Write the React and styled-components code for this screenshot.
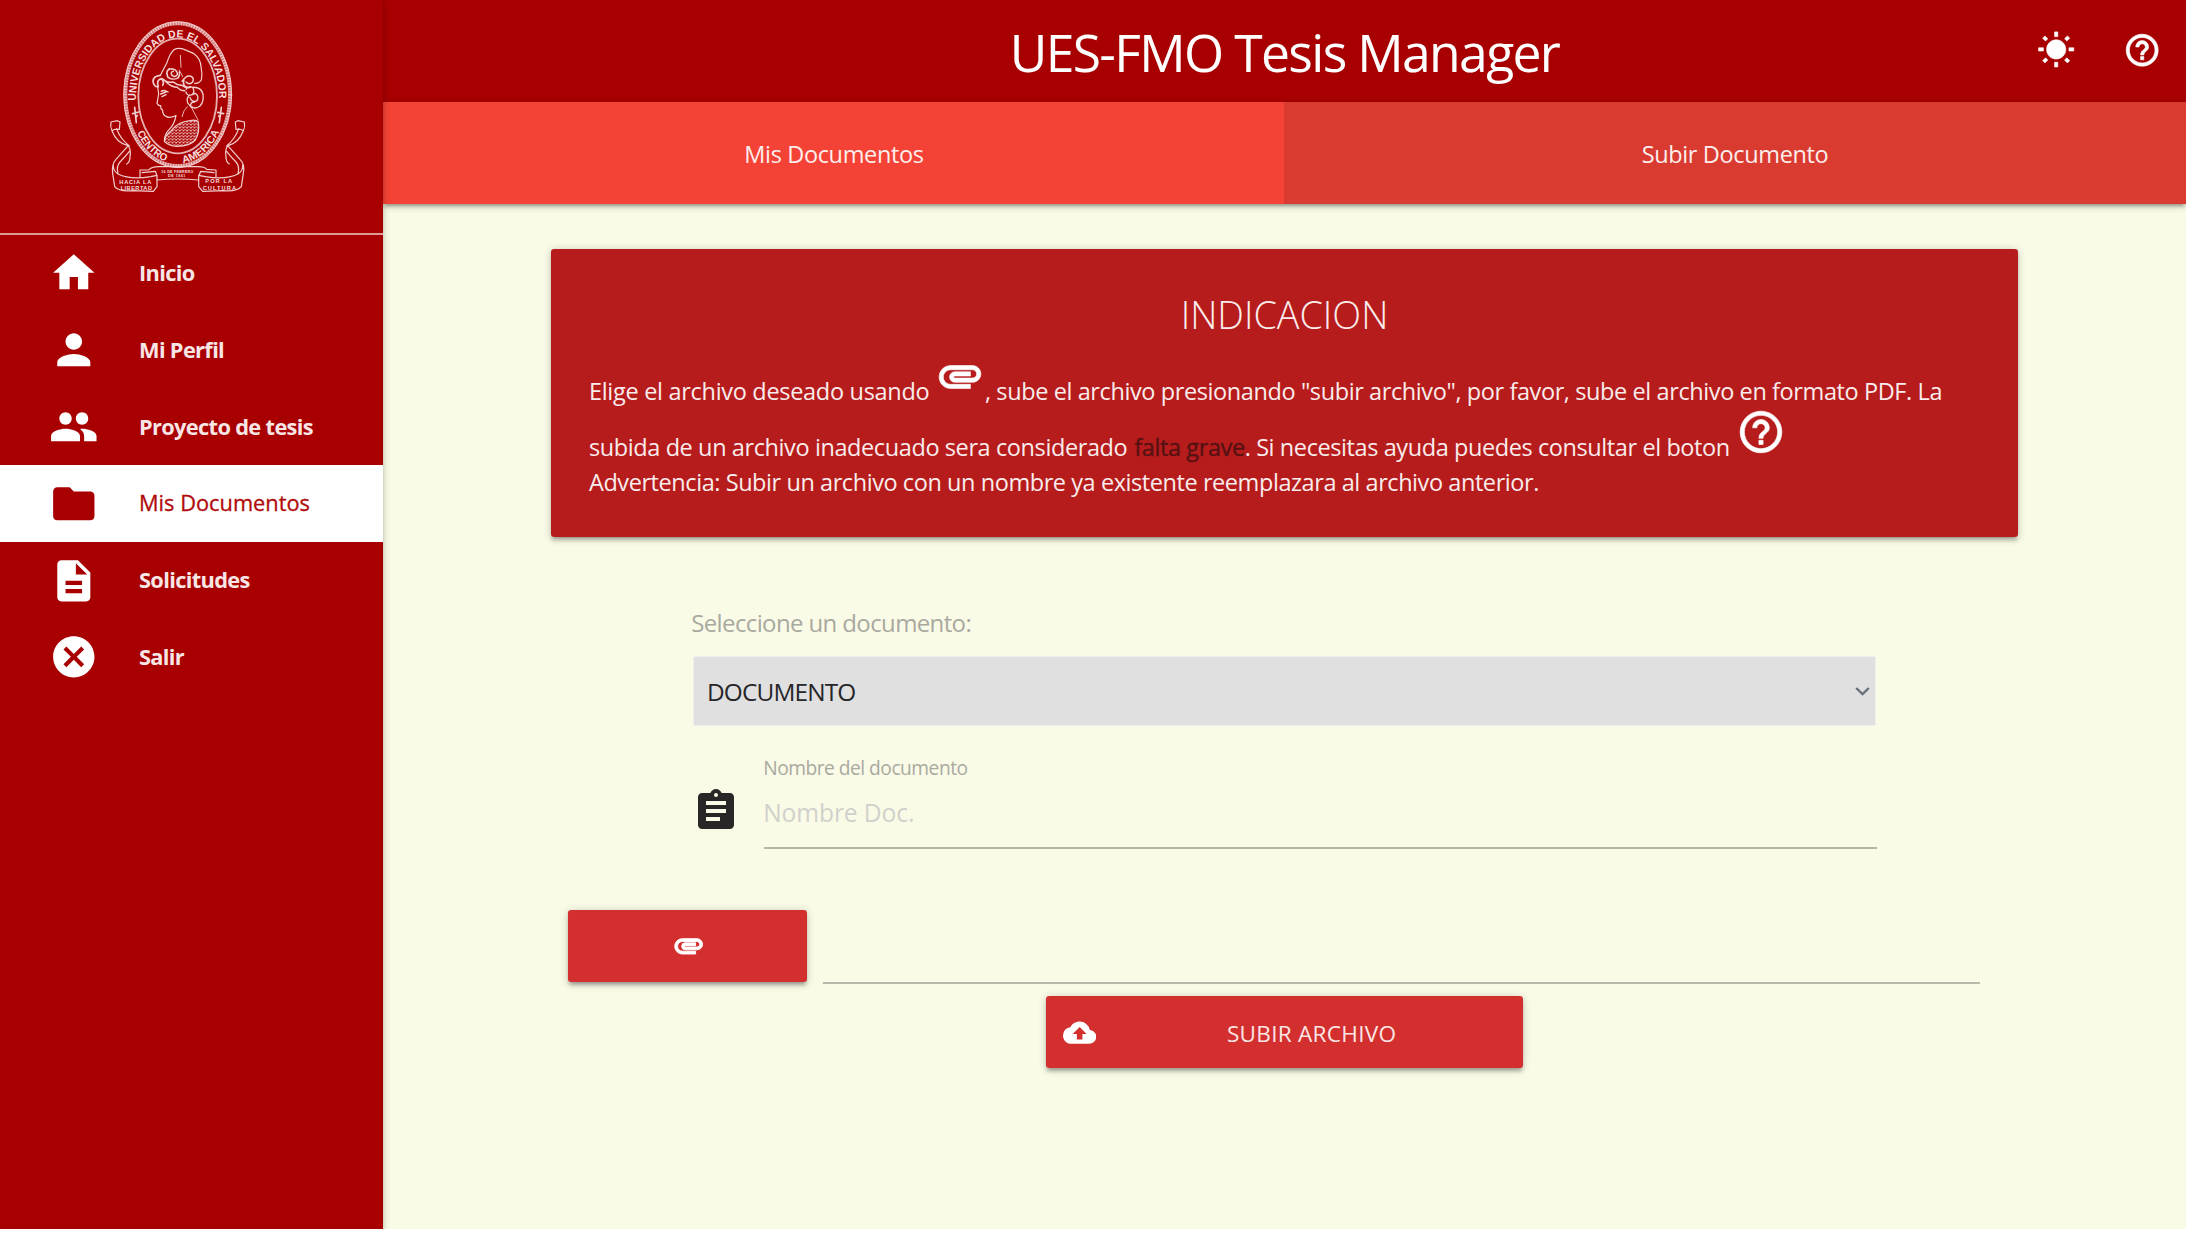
import React from 'react';
import styled, { createGlobalStyle } from 'styled-components';
import {
  MdHome,
  MdPerson,
  MdPeople,
  MdFolder,
  MdDescription,
  MdCancel,
  MdAttachment,
  MdHelpOutline,
  MdAssignment,
  MdCloudUpload,
} from 'react-icons/md';

const GlobalStyle = createGlobalStyle`
  *, *::before, *::after { box-sizing: border-box; }
  body {
    margin: 0;
    background: #ffffff;
    font-family: 'Open Sans', 'Noto Sans', sans-serif;
  }
  svg { display: block; }
  svg > path[fill='none'] { stroke: none; }
`;

const elevation = `
  box-shadow:
    0 3.2px 3.2px 0 rgba(0, 0, 0, 0.14),
    0 4.8px 1.6px -3.2px rgba(0, 0, 0, 0.12),
    0 1.6px 8px 0 rgba(0, 0, 0, 0.2);
`;

const Page = styled.div`
  display: flex;
  width: 2185.6px;
  height: 1228.8px;
  background: #f9fbe7;
  overflow: hidden;
`;

const Sidebar = styled.aside`
  flex: none;
  width: 383.4px;
  background: #a80000;
  ${elevation}
  z-index: 1;
`;

const SidebarHeader = styled.div`
  height: 234.8px;
  padding-left: 90px;
  border-bottom: 2px solid #dc9c94;
`;

const MenuItem = styled.a`
  display: flex;
  align-items: center;
  height: 76.8px;
  padding-left: 49px;
  gap: 40.4px;
  font-size: 21.8px;
  line-height: 30px;
  font-weight: ${(p) => (p.$active ? 400 : 700)};
  letter-spacing: ${(p) => (p.$active ? '0' : '-0.66px')};
  color: ${(p) => (p.$active ? '#b00a0a' : '#f8e6e6')};
  background: ${(p) => (p.$active ? '#ffffff' : 'transparent')};

  svg {
    width: 49.6px;
    height: 49.6px;
    color: ${(p) => (p.$active ? '#a80000' : '#ffffff')};
  }
`;

const MenuLabel = styled.span`
  padding-bottom: 0.4px;
  -webkit-text-stroke: ${(p) => (p.$active ? '0.3px #b00a0a' : '0')};
`;

const Main = styled.main`
  flex: 1;
  display: flex;
  flex-direction: column;
  align-items: center;
`;

const TopBar = styled.header`
  align-self: stretch;
  flex: none;
  display: grid;
  grid-template-columns: 1fr auto 1fr;
  height: 101.6px;
  background: #a80000;
`;

const Brand = styled.h1`
  grid-column: 2;
  margin: 0;
  font-size: 51.6px;
  font-weight: 400;
  line-height: 105px;
  height: 101.6px;
  letter-spacing: -1.65px;
  color: #ffffff;
`;

const Actions = styled.div`
  grid-column: 3;
  display: flex;
  justify-content: flex-end;
  align-items: center;
  gap: 48px;
  padding: 0 24px 1.6px 0;
  color: #ffffff;

  svg {
    width: 38.4px;
    height: 38.4px;
    stroke: #ffffff;
    stroke-width: 0.4;
  }
`;

const Tabs = styled.nav`
  align-self: stretch;
  flex: none;
  display: grid;
  grid-template-columns: 1fr 1fr;
  height: 102.4px;
  ${elevation}
`;

const Tab = styled.a`
  display: flex;
  align-items: center;
  justify-content: center;
  padding-top: 1.6px;
  background: ${(p) => (p.$active ? '#f44336' : '#da3b31')};
  color: #fdeeec;
  font-size: 23.5px;
  letter-spacing: -0.36px;
`;

const Card = styled.section`
  width: 1467px;
  height: 288px;
  margin-top: 45.4px;
  padding: 36px 38px 36px;
  border-radius: 3.2px;
  background: #b71c1c;
  color: #faecec;
  ${elevation}
`;

const CardTitle = styled.h2`
  margin: 0 0 7.4px;
  text-align: center;
  font-size: 37.7px;
  font-weight: 300;
  line-height: 60px;
`;

const Line = styled.div`
  display: flex;
  align-items: flex-end;
  height: ${(p) => p.$height}px;
  font-size: 23.5px;
  line-height: 35px;
  white-space: nowrap;

  svg {
    flex: none;
    width: 50px;
    height: 50px;
    color: #ffffff;
    stroke: #ffffff;
    stroke-width: 0.3;
    margin-bottom: 8px;
  }
`;

const Phrase = styled.span`
  letter-spacing: ${(p) => p.$spacing}px;
  margin-right: ${(p) => p.$gap || 0}px;
`;

const Severe = styled(Phrase)`
  color: #561212;
  -webkit-text-stroke: 0.4px #561212;
`;

const Form = styled.form`
  width: 1184.6px;
  margin-top: 67.8px;
`;

const SelectLabel = styled.label`
  display: block;
  margin-bottom: 15px;
  font-size: 24px;
  line-height: 36px;
  letter-spacing: -0.62px;
  text-indent: -1px;
  color: #a9a99f;
`;

const SelectBox = styled.div`
  display: flex;
  align-items: center;
  justify-content: space-between;
  width: 1183px;
  height: 69.8px;
  margin-left: 0.8px;
  padding: 0 5px 0 13px;
  border: 1.6px solid #f2f0ee;
  background: #e0e0e0;
  font-size: 24.4px;
  letter-spacing: -0.85px;
  color: #26262a;
`;

const Field = styled.div`
  display: flex;
  gap: 23.6px;
  margin-top: 28.4px;

  > svg {
    flex: none;
    width: 48px;
    height: 48px;
    margin-top: 32.8px;
    color: #2a2626;
  }
`;

const FieldBody = styled.div`
  flex: 1;
  border-bottom: 2px solid #b5b5a8;
`;

const FieldLabel = styled.label`
  display: block;
  font-size: 19.2px;
  line-height: 28px;
  letter-spacing: -0.5px;
  text-indent: -0.6px;
  color: #a9a99f;
`;

const FieldInput = styled.div`
  height: 65px;
  font-size: 24.6px;
  line-height: 61.4px;
  letter-spacing: -0.1px;
  text-indent: -0.6px;
  color: #d1d1cb;
`;

const FileRow = styled.div`
  display: flex;
  gap: 16px;
  width: 1412px;
  height: 74px;
  margin-top: 60.4px;
  margin-right: 20px;
`;

const Button = styled.button`
  display: flex;
  align-items: center;
  width: ${(p) => p.$width}px;
  height: 72.2px;
  border: 0;
  border-radius: 3.2px;
  background: #d32f2f;
  color: #fbe6e4;
  font-family: inherit;
  ${elevation}

  svg {
    flex: none;
    width: 33.3px;
    height: 33.3px;
    color: #ffffff;
  }
`;

const ClipButton = styled(Button)`
  justify-content: center;
  padding: 0 0 0 1.6px;

  svg {
    stroke: #ffffff;
    stroke-width: 0.7;
  }
`;

const UploadButton = styled(Button)`
  margin-top: 12.4px;
  padding: 0 17px;
`;

const UploadText = styled.span`
  flex: 1;
  padding: 1.6px 0 0 21px;
  text-align: center;
  font-size: 22.6px;
  letter-spacing: 0.25px;
`;

const FilePath = styled.div`
  flex: 1;
  border-bottom: 2px solid #b9b9ab;
`;

const Crest = styled.svg`
  width: 180px;
  height: 220px;
  fill: none;
  stroke: #f3d0d0;
  stroke-width: 3.6;
  stroke-linecap: round;
  stroke-linejoin: round;

  text {
    fill: #f8dede;
    stroke: none;
    font-family: 'Liberation Sans', Arial, sans-serif;
    font-weight: 700;
  }
`;

function Emblem() {
  return (
    <Crest viewBox="0 0 540 660">
      <defs>
        <path id="ringTop" d="M139 304 V288 A124 176 0 0 1 387 288 V304" />
        <path id="ringLeft" d="M141 398 A146 204 0 0 0 240 488" />
        <path id="ringRight" d="M279 489 A146 204 0 0 0 392 384" />
        <pattern id="mail" width="11" height="9" patternUnits="userSpaceOnUse">
          <path d="M0 2 Q5 9 11 2 M5 9 L6 5" strokeWidth="2.4" />
        </pattern>
      </defs>
      <ellipse cx="263" cy="284" rx="157" ry="214" strokeWidth="12" strokeOpacity="0.6" />
      <ellipse cx="263" cy="284" rx="157" ry="214" strokeWidth="10" strokeDasharray="3 5" strokeLinecap="butt" />
      <ellipse cx="263" cy="284" rx="162" ry="219" strokeWidth="2.6" />
      <ellipse cx="263" cy="288" rx="118" ry="172" strokeWidth="5.4" strokeOpacity="0.85" />
      <text fontSize="32">
        <textPath href="#ringTop" startOffset="2" textLength="496" lengthAdjust="spacingAndGlyphs">UNIVERSIDAD DE EL SALVADOR</textPath>
      </text>
      <text fontSize="31">
        <textPath href="#ringLeft" textLength="124" lengthAdjust="spacingAndGlyphs">CENTRO</textPath>
      </text>
      <text fontSize="31">
        <textPath href="#ringRight" textLength="150" lengthAdjust="spacingAndGlyphs">AMERICA</textPath>
      </text>
      <path d="M134 322 L139 368 M128 341 L146 336 M137 352 L142 347" strokeWidth="5" />
      <path d="M394 322 L388 368 M383 337 L401 341 M386 348 L390 352" strokeWidth="5" />

      <path d="M212 224 L230 190 Q240 158 252 149 Q266 141 284 149 L312 161 Q332 176 333 200 Q338 222 334 240 Q326 252 314 250" />
      <path d="M271 166 L273 202 M268 210 L278 230" strokeWidth="2.6" />
      <path d="M211 226 Q190 228 189 244 Q192 262 205 260 Q198 240 214 236 Q224 246 218 256" strokeWidth="5" />
      <path d="M230 222 Q230 206 246 206 Q264 210 262 224 Q256 234 246 226 Q240 216 250 214 M238 206 Q226 214 234 232 Q246 240 260 236 Q270 232 268 216" strokeWidth="4.4" />
      <path d="M216 236 Q232 250 250 246 Q262 256 276 256 Q290 266 302 262 M228 246 Q246 262 262 262 Q270 272 284 272 M276 244 Q288 226 300 228 Q314 232 308 246 Q298 256 288 246 M282 240 Q276 256 292 262" strokeWidth="4.4" />
      <path d="M288 268 Q294 256 308 262 Q316 276 306 284 Q292 290 288 276 M308 262 Q332 260 339 282 Q342 306 330 318 Q314 330 302 318 Q300 306 314 306 Q328 300 322 286 Q316 276 308 284 M300 292 Q304 306 318 304 M296 288 Q288 298 294 310 L304 322" strokeWidth="4" />
      <path d="M203 260 L206 282 L201 310 Q204 318 212 317 L213 326 Q220 330 218 336 Q222 352 240 352 Q254 350 258 346 Q254 372 238 388 Q224 402 223 420" />
      <path d="M212 282 L228 276 M216 290 L228 284 M214 274 Q222 268 234 276" strokeWidth="4.4" />
      <path d="M292 320 Q280 330 276 350 M304 322 Q316 344 324 360" strokeWidth="2.6" />
      <path
        d="M223 424 Q226 404 244 392 Q262 366 300 362 Q318 358 325 366 Q330 396 316 420 Q300 438 262 439 Q236 438 223 424 Z"
        fill="url(#mail)"
      />

      <path d="M63 366 L82 362 L90 366 L88 388 Q74 386 66 392 Q60 380 63 366 M66 392 Q80 428 112 436 Q124 444 120 470 Q120 486 110 492 M80 386 Q90 416 118 438 M112 440 Q98 456 78 478 Q64 494 68 520 L74 560 Q88 576 128 572 L190 574 L201 560 L201 526 L182 530 Q120 540 84 522 Q68 512 70 494 M120 452 Q106 470 90 486 Q78 500 84 520" />
      <path d="M463 366 L444 362 L436 366 L438 388 Q452 386 460 392 Q466 380 463 366 M460 392 Q446 428 416 436 Q404 444 408 470 Q408 486 418 492 M446 386 Q436 416 410 438 M416 440 Q430 456 450 478 Q466 494 460 520 L454 560 Q440 576 400 572 L338 574 L326 560 L326 526 L346 530 Q408 540 444 522 Q460 512 458 494 M408 452 Q422 470 438 486 Q450 500 444 520" />
      <path d="M150 510 L176 510 Q184 500 206 500 L324 500 Q344 500 350 508 L378 510 L378 530 M150 510 L150 530 M201 540 Q264 534 326 540 M156 518 L196 514 L200 524 M372 518 L332 514 L328 524" />
      <g fontSize="17">
        <text x="88" y="551" textLength="96">HACIA LA</text>
        <text x="92" y="569" textLength="94">LIBERTAD</text>
        <text x="346" y="550" textLength="80">POR LA</text>
        <text x="338" y="569" textLength="100">CULTURA</text>
      </g>
      <g fontSize="11">
        <text x="214" y="519" textLength="96">16 DE FEBRERO</text>
        <text x="234" y="532" textLength="52">DE 1841</text>
      </g>
    </Crest>
  );
}

function Sun() {
  return (
    <svg viewBox="0 0 24 24" fill="currentColor">
      <path d="M6.76 4.84l-1.8-1.79-1.41 1.41 1.79 1.79 1.42-1.41zM4 10.5H1v2h3v-2zm9-9.95h-2V3.5h2V.55zm7.45 3.91l-1.41-1.41-1.79 1.79 1.41 1.41 1.79-1.79zm-3.21 13.7l1.79 1.8 1.41-1.41-1.8-1.79-1.4 1.4zM20 10.5v2h3v-2h-3zm-8-5c-3.31 0-6 2.69-6 6s2.69 6 6 6 6-2.69 6-6-2.69-6-6-6zm-1 16.95h2V19.5h-2v2.95zm-7.45-3.91l1.41 1.41 1.79-1.8-1.41-1.41-1.79 1.8z" />
    </svg>
  );
}

function Chevron() {
  return (
    <svg width="15" height="10" viewBox="0 0 15 10" fill="none" stroke="#68707a" strokeWidth="2.4">
      <path d="M1.2 2 L7.5 8 L13.8 2" />
    </svg>
  );
}

const menu = [
  { label: 'Inicio', Icon: MdHome },
  { label: 'Mi Perfil', Icon: MdPerson },
  { label: 'Proyecto de tesis', Icon: MdPeople },
  { label: 'Mis Documentos', Icon: MdFolder, active: true },
  { label: 'Solicitudes', Icon: MdDescription },
  { label: 'Salir', Icon: MdCancel },
];

export default function App() {
  return (
    <>
      <GlobalStyle />
      <Page>
        <Sidebar>
          <SidebarHeader>
            <Emblem />
          </SidebarHeader>
          {menu.map(({ label, Icon, active }) => (
            <MenuItem key={label} $active={active}>
              <Icon />
              <MenuLabel $active={active}>{label}</MenuLabel>
            </MenuItem>
          ))}
        </Sidebar>
        <Main>
          <TopBar>
            <Brand>UES-FMO Tesis Manager</Brand>
            <Actions>
              <Sun />
              <MdHelpOutline />
            </Actions>
          </TopBar>
          <Tabs>
            <Tab $active>Mis Documentos</Tab>
            <Tab>Subir Documento</Tab>
          </Tabs>
          <Card>
            <CardTitle>INDICACION</CardTitle>
            <Line $height={56}>
              <Phrase $spacing={-0.3} $gap={5.6}>Elige el archivo deseado usando</Phrase>
              <MdAttachment />
              <Phrase $spacing={-0.4}>
                , sube el archivo presionando "subir archivo", por favor, sube el archivo en formato PDF. La
              </Phrase>
            </Line>
            <Line $height={56}>
              <Phrase $spacing={-0.4} $gap={7}>subida de un archivo inadecuado sera considerado</Phrase>
              <Severe $spacing={-0.4} $gap={0}>falta grave</Severe>
              <Phrase $spacing={-0.41} $gap={6.5}>. Si necesitas ayuda puedes consultar el boton</Phrase>
              <MdHelpOutline />
            </Line>
            <Line $height={35}>
              <Phrase $spacing={-0.43}>
                Advertencia: Subir un archivo con un nombre ya existente reemplazara al archivo anterior.
              </Phrase>
            </Line>
          </Card>
          <Form>
            <SelectLabel>Seleccione un documento:</SelectLabel>
            <SelectBox>
              DOCUMENTO
              <Chevron />
            </SelectBox>
            <Field>
              <MdAssignment />
              <FieldBody>
                <FieldLabel>Nombre del documento</FieldLabel>
                <FieldInput>Nombre Doc.</FieldInput>
              </FieldBody>
            </Field>
          </Form>
          <FileRow>
            <ClipButton type="button" $width={238.8}>
              <MdAttachment />
            </ClipButton>
            <FilePath />
          </FileRow>
          <UploadButton type="button" $width={477}>
            <MdCloudUpload />
            <UploadText>SUBIR ARCHIVO</UploadText>
          </UploadButton>
        </Main>
      </Page>
    </>
  );
}
